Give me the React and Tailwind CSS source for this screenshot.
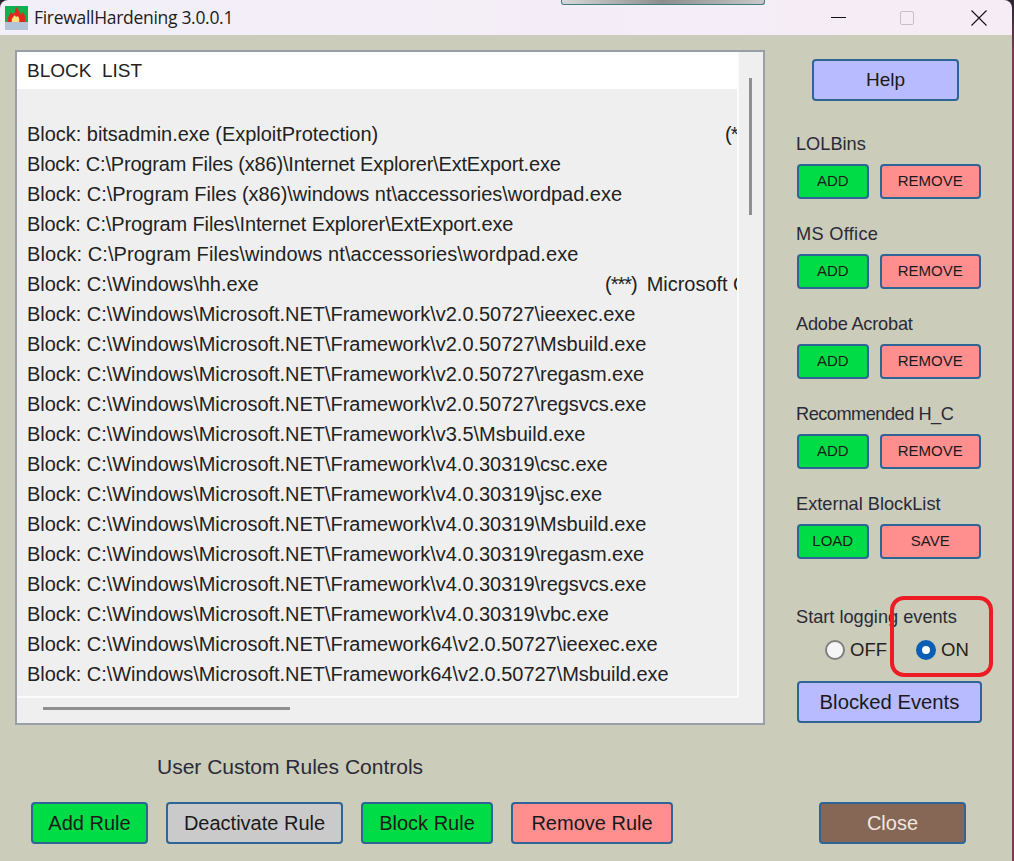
const rows = [
  { text: "Block: bitsadmin.exe (ExploitProtection)", gap: 698, mark: "(***" },
  { text: "Block: C:\\Program Files (x86)\\Internet Explorer\\ExtExport.exe", cls: "tracking-[-0.18px]" },
  { text: "Block: C:\\Program Files (x86)\\windows nt\\accessories\\wordpad.exe" },
  { text: "Block: C:\\Program Files\\Internet Explorer\\ExtExport.exe", cls: "tracking-[-0.13px]" },
  { text: "Block: C:\\Program Files\\windows nt\\accessories\\wordpad.exe", cls: "tracking-[0.1px]" },
  { text: "Block: C:\\Windows\\hh.exe", gap: 578, mark: "(***)", extra: "Microsoft Office" },
  { text: "Block: C:\\Windows\\Microsoft.NET\\Framework\\v2.0.50727\\ieexec.exe" },
  { text: "Block: C:\\Windows\\Microsoft.NET\\Framework\\v2.0.50727\\Msbuild.exe" },
  { text: "Block: C:\\Windows\\Microsoft.NET\\Framework\\v2.0.50727\\regasm.exe" },
  { text: "Block: C:\\Windows\\Microsoft.NET\\Framework\\v2.0.50727\\regsvcs.exe" },
  { text: "Block: C:\\Windows\\Microsoft.NET\\Framework\\v3.5\\Msbuild.exe" },
  { text: "Block: C:\\Windows\\Microsoft.NET\\Framework\\v4.0.30319\\csc.exe" },
  { text: "Block: C:\\Windows\\Microsoft.NET\\Framework\\v4.0.30319\\jsc.exe" },
  { text: "Block: C:\\Windows\\Microsoft.NET\\Framework\\v4.0.30319\\Msbuild.exe" },
  { text: "Block: C:\\Windows\\Microsoft.NET\\Framework\\v4.0.30319\\regasm.exe" },
  { text: "Block: C:\\Windows\\Microsoft.NET\\Framework\\v4.0.30319\\regsvcs.exe" },
  { text: "Block: C:\\Windows\\Microsoft.NET\\Framework\\v4.0.30319\\vbc.exe" },
  { text: "Block: C:\\Windows\\Microsoft.NET\\Framework64\\v2.0.50727\\ieexec.exe" },
  { text: "Block: C:\\Windows\\Microsoft.NET\\Framework64\\v2.0.50727\\Msbuild.exe" },
];

const groups = [
  ["LOLBins", "ADD", "REMOVE", ""],
  ["MS Office", "ADD", "REMOVE", "tracking-[0.3px]"],
  ["Adobe Acrobat", "ADD", "REMOVE", "tracking-[-0.2px]"],
  ["Recommended H_C", "ADD", "REMOVE", "tracking-[-0.5px]"],
  ["External BlockList", "LOAD", "SAVE", ""],
];

const base =
  "flex items-center justify-center rounded-[4px] border-2 border-[#2f6496] text-[#1a1a1a]";

function AppIcon() {
  return (
    <svg width="23" height="24" viewBox="0 0 23 24" className="shrink-0">
      <rect width="23" height="16" fill="#10b050" />
      <rect y="16" width="23" height="8" fill="#b4c3d6" />
      <path d="M3 16C2 11 5 9 6 6c1 1 2 2 3 2 1-2 1-5 3-7 1 3 3 5 4 8 1-1 1-2 2-3 2 3 3 6 2 10Z" fill="#e4261c" />
      <path d="M7 16c-1-3 1-5 3-7 0 2 2 2 3 1 1 2 2 4 1 6Z" fill="#fbe27a" />
    </svg>
  );
}

function WindowControls() {
  return (
    <div className="ml-auto flex items-center">
      <div className="mr-[54px] h-px w-[15px] bg-[#111]" />
      <div className="mr-[57px] h-[14px] w-[14px] rounded-[2px] border border-[#c4c0c8]" />
      <svg width="16" height="16" viewBox="0 0 16 16" className="mr-[25px]" stroke="#111" strokeWidth="1.1">
        <path d="M.5.5l15 15M15.5.5l-15 15" />
      </svg>
    </div>
  );
}

function Radio({ label, on, className }) {
  return (
    <div className={`flex items-center gap-[5px] ${className}`}>
      {on ? (
        <span className="h-5 w-5 rounded-full border-[6px] border-[#0a5fb4] bg-white" />
      ) : (
        <span className="h-5 w-5 rounded-full border-2 border-[#7f7f7f] bg-[#f5f5f5]" />
      )}
      <span className="text-[18.5px] leading-5 text-[#222]">{label}</span>
    </div>
  );
}

function ListBox() {
  return (
    <div className="relative h-[675px] w-[750px] overflow-hidden border-2 border-[#9a9ea6] bg-[#efefef]">
      <div className="h-[646px] w-[722px] overflow-hidden border-r-2 border-b-2 border-[#fbfbfb]">
        <div className="flex h-[37px] items-center bg-white pl-[10px] pt-[2px] text-[19px] text-[#222]">BLOCK&nbsp; LIST</div>
        <div className="h-[30px]" />
        {rows.map((r) => (
          <div key={r.text} className={`flex h-[30px] items-center whitespace-nowrap pl-[10px] text-[20px] text-[#222] ${r.cls || "tracking-[-0.03px]"}`}>
            <span style={r.gap ? { width: r.gap } : undefined} className="shrink-0">{r.text}</span>
            {r.mark && <span className="shrink-0 tracking-[-1px]">{r.mark}</span>}
            {r.extra && <span className="ml-[10px] shrink-0">{r.extra}</span>}
          </div>
        ))}
      </div>
      <div className="absolute left-[732px] top-[26px] h-[137px] w-[3px] bg-[#8f8f8f]" />
      <div className="absolute bottom-[13px] left-[26px] h-[3px] w-[247px] bg-[#8f8f8f]" />
    </div>
  );
}

export default function App() {
  return (
    <div className="relative h-[861px] w-[1014px] overflow-hidden bg-gradient-to-b from-[#2b2430] to-[#7a3a55] to-[6%] pr-[2px] font-['Liberation_Sans',Arial,sans-serif]">
      <div className="flex h-[35px] items-center rounded-t-[8px] bg-gradient-to-r from-[#f2eff8] to-[#f6ecf6] pl-[5px]">
        <AppIcon />
        <span className="ml-[6px] font-['Open_Sans',sans-serif] text-[17.5px] tracking-[-0.3px] text-[#1c1c1c]">FirewallHardening 3.0.0.1</span>
        <WindowControls />
      </div>
      {/* piece of another window peeking in over the title bar */}
      <div className="absolute left-[561px] top-0 h-[5px] w-[204px] rounded-b-[3px] border border-t-0 border-[#3f7f80] bg-gradient-to-r from-[#d8d8d8] via-[#8d8d8d] to-[#c8c8c8]" />

      <div className="h-[826px] bg-[#cbccb9]">
        <div className="flex pl-[15px] pt-[15px]">
          <ListBox />
          <div className="ml-[31px] flex w-[185px] flex-col">
            <button className={`${base} ml-[16px] mt-[9px] h-[42px] w-[147px] bg-[#b8bbff] text-[19px]`}>Help</button>
            <div className="mt-[33px] flex flex-col gap-[25px]">
              {groups.map(([label, a, b, cls]) => (
                <div key={label} className="flex flex-col">
                  <div className={`h-[20px] text-[18.2px] leading-5 text-[#2a2a38] ${cls}`}>{label}</div>
                  <div className="mt-[10px] flex gap-[11px] pl-px">
                    <button className={`${base} h-[35px] w-[72px] bg-[#00dc46] text-[15px]`}>{a}</button>
                    <button className={`${base} h-[35px] w-[102px] bg-[#ff8e8e] text-[15px]`}>{b}</button>
                  </div>
                </div>
              ))}
            </div>
            <div className="mt-[48px] h-[20px] text-[18.2px] leading-5 text-[#2a2a38]">Start logging events</div>
            <div className="mt-[13px] flex">
              <Radio label="OFF" className="ml-[29px]" />
              <Radio label="ON" on className="ml-[29px]" />
            </div>
            <button className={`${base} ml-px mt-[21px] h-[42px] w-[185px] bg-[#b8bbff] text-[20.3px]`}>Blocked Events</button>
          </div>
        </div>

        <div className="ml-[157px] mt-[30px] h-[24px] text-[21px] leading-6 text-[#2a2a38]">User Custom Rules Controls</div>
        <div className="mt-[23px] flex pl-[31px]">
          <button className={`${base} h-[42px] w-[117px] bg-[#00dc46] text-[20px]`}>Add Rule</button>
          <button className={`${base} ml-[18px] h-[42px] w-[177px] bg-[#cacaca] text-[20px]`}>Deactivate Rule</button>
          <button className={`${base} ml-[18px] h-[42px] w-[132px] bg-[#00dc46] text-[20px]`}>Block Rule</button>
          <button className={`${base} ml-[18px] h-[42px] w-[162px] bg-[#ff8e8e] text-[20px]`}>Remove Rule</button>
          <button className={`${base} ml-[146px] h-[42px] w-[147px] bg-[#866655] text-[20px] !text-[#f0e8e0]`}>Close</button>
        </div>
      </div>

      {/* annotation drawn over the screenshot */}
      <div className="pointer-events-none absolute left-[890px] top-[596px] h-[81px] w-[103px] rounded-[14px] border-[4px] border-[#ed1c24]" />
    </div>
  );
}
